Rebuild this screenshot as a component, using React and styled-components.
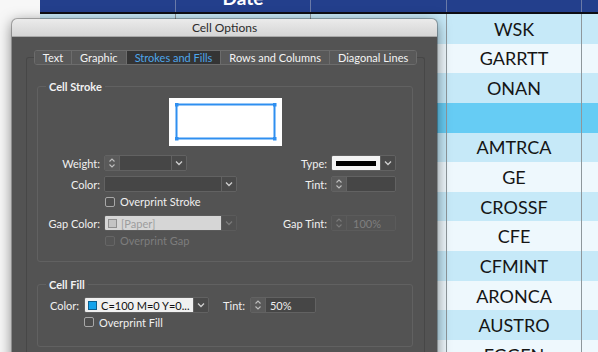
import React from 'react';
import styled, { createGlobalStyle } from 'styled-components';

const Global = createGlobalStyle`
  html, body { margin: 0; padding: 0; }
  body {
    width: 598px; height: 352px; overflow: hidden;
    background: #f6f6f6;
    font-family: Lato, "Open Sans", "DejaVu Sans", sans-serif;
  }
`;

const Page = styled.div`
  position: relative;
  width: 598px;
  height: 352px;
  overflow: hidden;
  background: #f7f7f7;
`;

/* ---------- spreadsheet ---------- */
const Table = styled.div`
  margin-left: 40px;
  width: 600px;
`;

const COLS = '136px 135px 136px 135px 58px';

const HeaderRow = styled.div`
  display: grid;
  grid-template-columns: ${COLS};
  height: 12px;
  background: #233f8c;
  border-bottom: 2px solid #0d0d14;
`;

const HeaderCell = styled.div`
  border-right: 1px solid #6a7aa8;
  display: flex;
  align-items: flex-end;
  justify-content: center;
  overflow: hidden;
  color: #fff;
  font: 700 19px/18px Lato, sans-serif;
  & > span { margin-bottom: 5px; }
`;

const Body = styled.div`
  display: grid;
  grid-auto-rows: 29.65px;
`;

const tones = {
  blue: '#c6e9f8',
  pale: '#eef8fd',
  sel: '#66ccf4',
};

const Row = styled.div`
  display: grid;
  grid-template-columns: ${COLS};
  background: ${(p) => tones[p.$tone]};
`;

const Cell = styled.div`
  border-right: 1px solid #8e979c;
  display: flex;
  align-items: center;
  justify-content: center;
  color: #151515;
  font: 400 18px/1 Lato, sans-serif;
`;

/* ---------- dialog ---------- */
const Dialog = styled.div`
  position: absolute;
  left: 12px;
  top: 19px;
  width: 425px;
  height: 345px;
  border-radius: 5px 5px 0 0;
  background: #535353;
  box-shadow: 0 3px 14px rgba(0, 0, 0, 0.5), 0 0 0 1px rgba(0, 0, 0, 0.25);
  display: flex;
  flex-direction: column;
  overflow: hidden;
  font-family: Lato, "Open Sans", sans-serif;
`;

const TitleBar = styled.div`
  height: 18px;
  flex: none;
  background: linear-gradient(#ebebeb, #d5d5d5);
  border-bottom: 1px solid #a9a9a9;
  box-sizing: border-box;
  display: flex;
  align-items: center;
  justify-content: center;
  color: #2b2b2b;
  font-size: 12px;
`;

const DialogBody = styled.div`
  flex: 1;
  display: flex;
  flex-direction: column;
  padding: 13px 12px 0 14px;
`;

const TabBar = styled.div`
  align-self: center;
  display: flex;
  position: relative;
  z-index: 1;
  margin-bottom: -8px;
  border: 1px solid #6c6c6c;
  border-radius: 3px;
  overflow: hidden;
`;

const Tab = styled.div`
  height: 13px;
  padding: 0 ${(p) => p.$pad}px;
  display: flex;
  align-items: center;
  font-size: 11px;
  color: ${(p) => (p.$active ? '#4ea6ea' : '#f4f4f4')};
  background: ${(p) => (p.$active ? '#343434' : '#595959')};
  & + & { border-left: 1px solid #6c6c6c; }
`;

const Panel = styled.div`
  flex: 1;
  border: 1px solid #474747;
  border-bottom: none;
  border-radius: 3px 3px 0 0;
  padding: 22px 11px 0 10px;
  display: flex;
  flex-direction: column;
`;

const Group = styled.fieldset`
  margin: ${(p) => p.$mt || 0}px 0 0 0;
  padding: 0 0 ${(p) => p.$pb}px 0;
  min-width: 0;
  border: 1px solid #616161;
  border-radius: 3px;
  display: flex;
  flex-direction: column;
`;

const Legend = styled.legend`
  margin-left: 8px;
  padding: 0 3px;
  font-size: 11px;
  line-height: 13px;
  font-weight: 700;
  color: #f2f2f2;
`;

const Proxy = styled.div`
  align-self: center;
  margin-top: 5px;
  width: 113px;
  height: 48px;
  display: flex;
`;

const FormRow = styled.div`
  display: grid;
  grid-template-columns: 62px 133px 86px 64px;
  column-gap: 4px;
  height: ${(p) => p.$h}px;
  margin-top: ${(p) => p.$mt}px;
  align-items: center;
`;

const Label = styled.div`
  font-size: 11px;
  color: #f0f0f0;
  text-align: right;
  white-space: nowrap;
`;

const Control = styled.div`
  display: flex;
  height: 16px;
  width: ${(p) => p.$w}px;
  box-sizing: border-box;
  border: 1px solid ${(p) => (p.$disabled ? '#5b5b5b' : '#626262')};
  border-radius: 2px;
  overflow: hidden;
`;

const Spin = styled.div`
  width: 14px;
  flex: none;
  background: ${(p) => (p.$disabled ? '#545454' : '#5a5a5a')};
  border-right: 1px solid ${(p) => (p.$disabled ? '#5b5b5b' : '#626262')};
  display: flex;
  align-items: center;
  justify-content: center;
`;

const Input = styled.div`
  flex: 1;
  background: ${(p) => p.$bg || '#464646'};
  color: ${(p) => p.$color || '#eeeeee'};
  font-size: 11px;
  display: flex;
  align-items: center;
  gap: 4px;
  padding-left: ${(p) => p.$pl ?? 4}px;
  white-space: nowrap;
  overflow: hidden;
`;

const Drop = styled.div`
  width: 14px;
  flex: none;
  background: ${(p) => (p.$disabled ? '#515151' : '#4a4a4a')};
  border-left: 1px solid ${(p) => (p.$disabled ? '#5b5b5b' : '#626262')};
  display: flex;
  align-items: center;
  justify-content: center;
`;

const TypeSwatch = styled.div`
  flex: 1;
  background: #f4f4f4;
  display: flex;
  align-items: center;
  justify-content: center;
  &::after {
    content: '';
    width: 40px;
    height: 5px;
    background: #000;
  }
`;

const Swatch = styled.span`
  width: 9px;
  height: 9px;
  box-sizing: border-box;
  flex: none;
  border: 1px solid ${(p) => p.$border};
  background: ${(p) => p.$fill};
`;

const Check = styled.label`
  display: flex;
  align-items: center;
  gap: 5px;
  font-size: 11px;
  color: ${(p) => (p.$disabled ? '#7d7d7d' : '#f0f0f0')};
  margin-left: ${(p) => p.$ml}px;
  &::before {
    content: '';
    width: 10px;
    height: 10px;
    box-sizing: border-box;
    border: 1px solid ${(p) => (p.$disabled ? '#666' : '#a8a8a8')};
    border-radius: 2px;
    background: ${(p) => (p.$disabled ? '#555' : '#4d4d4d')};
  }
`;

const CheckRow = styled.div`
  grid-column: 2 / 3;
  display: flex;
  height: ${(p) => p.$h}px;
  align-items: center;
`;

const FillRow = styled.div`
  display: flex;
  align-items: center;
  height: ${(p) => p.$h}px;
  margin-top: ${(p) => p.$mt}px;
  padding-left: 12px;
`;

const FillLabel = styled.div`
  font-size: 11px;
  color: #f0f0f0;
  margin: 0 ${(p) => p.$mr}px 0 ${(p) => p.$ml}px;
`;

/* ---------- icons ---------- */
const SpinIcon = ({ c = '#bdbdbd' }) => (
  <svg width="8" height="12" viewBox="0 0 8 12">
    <path d="M1.5 4.5 L4 2 L6.5 4.5" fill="none" stroke={c} strokeWidth="1.1" />
    <path d="M1.5 7.5 L4 10 L6.5 7.5" fill="none" stroke={c} strokeWidth="1.1" />
  </svg>
);

const Chevron = ({ c = '#cfcfcf' }) => (
  <svg width="8" height="6" viewBox="0 0 8 6">
    <path d="M1 1.5 L4 4.5 L7 1.5" fill="none" stroke={c} strokeWidth="1.3" />
  </svg>
);

const ProxyArt = () => (
  <svg width="113" height="48" viewBox="0 0 113 48">
    <rect x="0" y="0" width="113" height="48" fill="#ffffff" />
    <rect x="7.5" y="6.5" width="98" height="34" fill="none" stroke="#2f8ff0" strokeWidth="2" />
    {[
      [6, 5],
      [104, 5],
      [6, 39],
      [104, 39],
    ].map(([x, y]) => (
      <rect key={`${x}-${y}`} x={x} y={y} width="3.5" height="3.5" fill="#2f8ff0" />
    ))}
  </svg>
);

const tabs = [
  { label: 'Text', pad: 8 },
  { label: 'Graphic', pad: 8 },
  { label: 'Strokes and Fills', pad: 8, active: true },
  { label: 'Rows and Columns', pad: 8 },
  { label: 'Diagonal Lines', pad: 8 },
];

const rows = [
  { t: 'WSK', tone: 'blue' },
  { t: 'GARRTT', tone: 'pale' },
  { t: 'ONAN', tone: 'blue' },
  { t: '', tone: 'sel' },
  { t: 'AMTRCA', tone: 'blue' },
  { t: 'GE', tone: 'pale' },
  { t: 'CROSSF', tone: 'blue' },
  { t: 'CFE', tone: 'pale' },
  { t: 'CFMINT', tone: 'blue' },
  { t: 'ARONCA', tone: 'pale' },
  { t: 'AUSTRO', tone: 'blue' },
  { t: 'EGGEN', tone: 'pale' },
];

export default function App() {
  return (
    <>
      <Global />
      <Page>
        <Table>
          <HeaderRow>
            <HeaderCell />
            <HeaderCell>
              <span>Date</span>
            </HeaderCell>
            <HeaderCell />
            <HeaderCell />
            <HeaderCell />
          </HeaderRow>
          <Body>
            {rows.map((r, i) => (
              <Row key={i} $tone={r.tone}>
                <Cell />
                <Cell />
                <Cell />
                <Cell>{r.t}</Cell>
                <Cell />
              </Row>
            ))}
          </Body>
        </Table>

        <Dialog>
          <TitleBar>Cell Options</TitleBar>
          <DialogBody>
            <TabBar>
              {tabs.map((t) => (
                <Tab key={t.label} $active={t.active} $pad={t.pad}>
                  {t.label}
                </Tab>
              ))}
            </TabBar>
            <Panel>
              <Group $pb={15}>
                <Legend>Cell Stroke</Legend>
                <Proxy>
                  <ProxyArt />
                </Proxy>

                <FormRow $h={16} $mt={9}>
                  <Label>Weight:</Label>
                  <Control $w={83}>
                    <Spin>
                      <SpinIcon />
                    </Spin>
                    <Input />
                    <Drop>
                      <Chevron />
                    </Drop>
                  </Control>
                  <Label>Type:</Label>
                  <Control $w={65}>
                    <TypeSwatch />
                    <Drop>
                      <Chevron />
                    </Drop>
                  </Control>
                </FormRow>

                <FormRow $h={16} $mt={5}>
                  <Label>Color:</Label>
                  <Control $w={133}>
                    <Input />
                    <Drop>
                      <Chevron />
                    </Drop>
                  </Control>
                  <Label>Tint:</Label>
                  <Control $w={65}>
                    <Spin>
                      <SpinIcon />
                    </Spin>
                    <Input />
                  </Control>
                </FormRow>

                <FormRow $h={11} $mt={4}>
                  <span />
                  <CheckRow $h={11}>
                    <Check $ml={1}>Overprint Stroke</Check>
                  </CheckRow>
                </FormRow>

                <FormRow $h={16} $mt={8}>
                  <Label>Gap Color:</Label>
                  <Control $w={133} $disabled>
                    <Input $bg="#d6d6d6" $color="#9d9d9d" $pl={3}>
                      <Swatch $border="#8f8f8f" $fill="#c4c4c4" />
                      [Paper]
                    </Input>
                    <Drop $disabled>
                      <Chevron c="#7a7a7a" />
                    </Drop>
                  </Control>
                  <Label>Gap Tint:</Label>
                  <Control $w={65} $disabled>
                    <Spin $disabled>
                      <SpinIcon c="#7a7a7a" />
                    </Spin>
                    <Input $bg="#545454" $color="#7f7f7f" $pl={6}>
                      100%
                    </Input>
                  </Control>
                </FormRow>

                <FormRow $h={11} $mt={4}>
                  <span />
                  <CheckRow $h={11}>
                    <Check $ml={1} $disabled>
                      Overprint Gap
                    </Check>
                  </CheckRow>
                </FormRow>
              </Group>

              <Group $mt={16} $pb={19}>
                <Legend>Cell Fill</Legend>
                <FillRow $h={16} $mt={6}>
                  <FillLabel $ml={0} $mr={5}>
                    Color:
                  </FillLabel>
                  <Control $w={125}>
                    <Input $bg="#f0f0f0" $color="#111" $pl={3}>
                      <Swatch $border="#0b5f8f" $fill="#14a3ec" />
                      C=100 M=0 Y=0...
                    </Input>
                    <Drop>
                      <Chevron />
                    </Drop>
                  </Control>
                  <FillLabel $ml={14} $mr={5}>
                    Tint:
                  </FillLabel>
                  <Control $w={66}>
                    <Spin>
                      <SpinIcon />
                    </Spin>
                    <Input $pl={4}>50%</Input>
                  </Control>
                </FillRow>
                <FillRow $h={10} $mt={4}>
                  <Check $ml={34}>Overprint Fill</Check>
                </FillRow>
              </Group>
            </Panel>
          </DialogBody>
        </Dialog>
      </Page>
    </>
  );
}
